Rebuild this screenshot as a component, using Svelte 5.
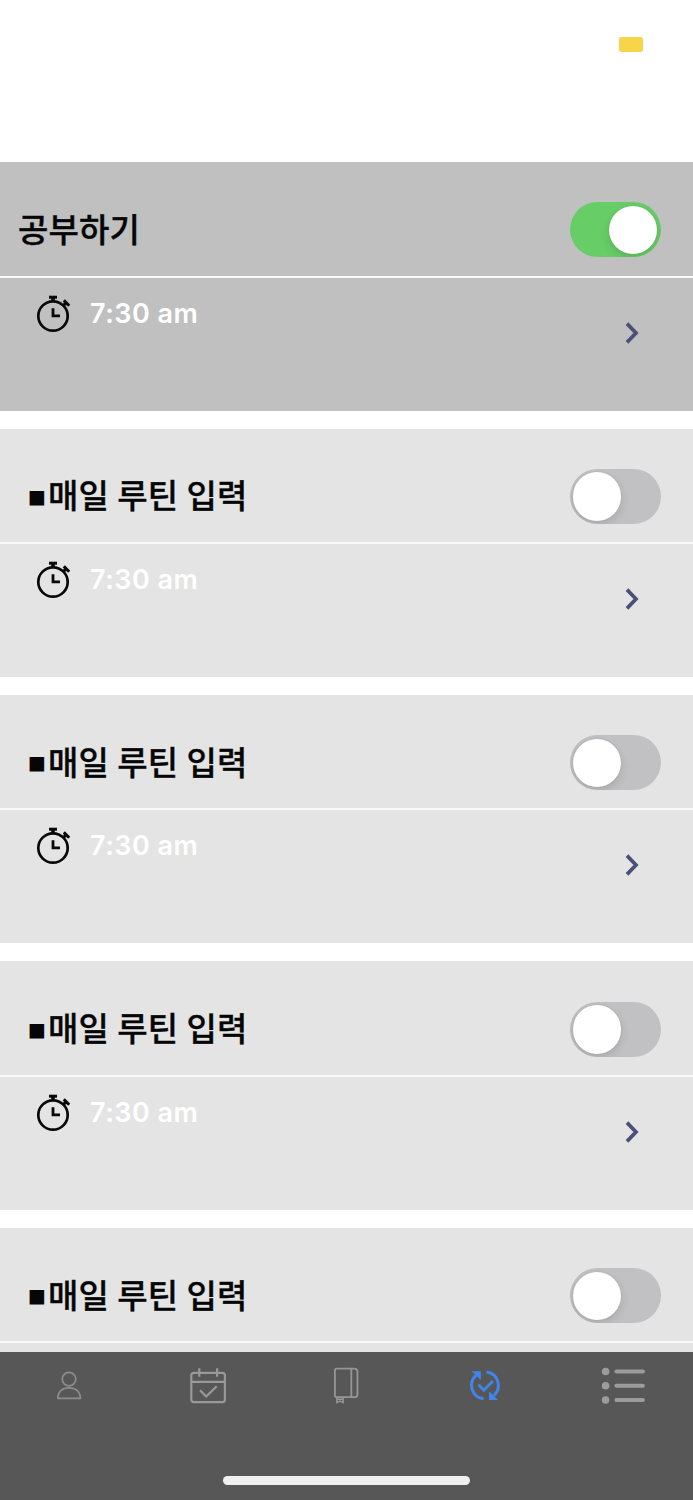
<script>
  const routines = [
    { title: '공부하기', time: '7:30 am', on: true },
    { title: '매일 루틴 입력', time: '7:30 am', on: false, marker: true },
    { title: '매일 루틴 입력', time: '7:30 am', on: false, marker: true },
    { title: '매일 루틴 입력', time: '7:30 am', on: false, marker: true },
    { title: '매일 루틴 입력', on: false, marker: true }
  ];
</script>

<div class="screen">
  <header class="status"><span class="battery"></span></header>

  <main class="list">
    {#each routines as routine}
      <section class="card" class:active={routine.on}>
        <div class="head">
          <h2 class:marked={routine.marker}>
            {#if routine.marker}<span class="marker">■</span>{/if}<span>{routine.title}</span>
          </h2>
          <div class="switch" class:on={routine.on} role="switch" aria-checked={routine.on} tabindex="0" aria-label={routine.title}>
            <span class="knob"></span>
          </div>
        </div>
        {#if routine.time}
          <div class="body">
            <svg class="timer" viewBox="0 0 36 40" width="36" height="40" fill="none" stroke="#080808">
              <circle cx="17" cy="23" r="14.7" stroke-width="2.7" />
              <path d="M13 4.2h8" stroke-width="3" />
              <path d="M17 5v4" stroke-width="3.6" />
              <path d="M17 15.2V22.9H24" stroke-width="2.8" />
              <path d="M27 13l3.2-3.3" stroke-width="3.2" />
              <path d="M27.8 7.4l5.4 5.4" stroke-width="3" />
            </svg>
            <span class="time">{routine.time}</span>
            <svg class="chevron" viewBox="0 0 16 24" width="16" height="24" fill="none" stroke="#4a5078" stroke-width="3.7">
              <path d="M3 2.6L12 12L3 21.4" />
            </svg>
          </div>
        {/if}
      </section>
    {/each}
  </main>

  <footer class="dock">
    <nav>
      <div class="tab">
        <svg viewBox="0 0 48 44" width="48" height="44" fill="none" stroke="#8c8c8c" stroke-width="1.7">
          <circle cx="24" cy="15.1" r="6.8" />
          <path d="M12.8 34.3C13 27.3 17.6 23.8 24 23.8S35.2 27.3 35.5 34.3Z" stroke-linejoin="round" />
        </svg>
      </div>
      <div class="tab">
        <svg viewBox="0 0 48 44" width="48" height="44" fill="none" stroke="#999" stroke-width="2.2">
          <rect x="7.3" y="8.8" width="33.6" height="29.3" rx="2.6" />
          <path d="M7.3 17.8h33.6M15.3 4.3v8.5M33.1 4.3v8.5" />
          <path d="M16 26.3l6.2 6.2L32.7 22.2" />
        </svg>
      </div>
      <div class="tab">
        <svg viewBox="0 0 48 44" width="48" height="44" fill="none" stroke="#969696" stroke-width="1.8">
          <path d="M12.9 31.6V6.5Q12.9 4.6 14.8 4.6H32.2Q35.4 4.6 35.4 7.8V30.4Q35.4 33.2 32.6 33.2H14.5Q12.9 33.2 12.9 31.6ZM29.3 4.6V33.2" />
          <path d="M14.9 33v5.6l3.1-1.5 3.1 1.5V33M15 35.2h6" stroke-width="1.5" />
        </svg>
      </div>
      <div class="tab">
        <svg viewBox="0 0 48 44" width="48" height="44" fill="none" stroke="#3f85ee" stroke-width="3">
          <path d="M22.6 34.8A13.5 13.5 0 0 1 15.2 11.2" />
          <path d="M25.6 8A13.5 13.5 0 0 1 32.8 31.5" />
          <path d="M10.8 7.3h9v8.6z" fill="#3f85ee" stroke="none" />
          <path d="M37 35.9h-9v-8.6z" fill="#3f85ee" stroke="none" />
          <path d="M17.4 20.6l5.4 5.7 9.2-9.4" stroke-width="2.8" />
        </svg>
      </div>
      <div class="tab">
        <svg viewBox="0 0 48 44" width="48" height="44" fill="#9c9c9c">
          <circle cx="5.6" cy="7.5" r="3.8" /><circle cx="5.6" cy="21.8" r="3.8" /><circle cx="5.6" cy="36" r="3.8" />
          <rect x="14.4" y="5.5" width="30.5" height="4" rx="2" />
          <rect x="14.4" y="19.8" width="30.5" height="4" rx="2" />
          <rect x="14.4" y="34" width="30.5" height="4" rx="2" />
        </svg>
      </div>
    </nav>
    <div class="home"></div>
  </footer>
</div>

<style>
  :global(body) { background: #fff; overflow: hidden; }
  .screen {
    width: 693px;
    height: 1500px;
    display: flex;
    flex-direction: column;
    overflow: hidden;
    background: #fff;
    font-family: Inter, "Noto Sans CJK KR", sans-serif;
  }
  .status {
    flex: none;
    box-sizing: border-box;
    height: 162.3px;
    padding: 37px 50px 0 0;
    display: flex;
    justify-content: flex-end;
  }
  .battery { width: 24px; height: 14.5px; border-radius: 2.5px; background: #f7d54b; }
  .list {
    flex: 1;
    min-height: 0;
    overflow: hidden;
    display: flex;
    flex-direction: column;
    gap: 18px;
  }
  .card { flex: none; height: 248.4px; background: #e4e4e4; }
  .card.active { background: #c0c0c0; }
  .head {
    box-sizing: border-box;
    height: 115.3px;
    padding: 22px 32.5px 0 18px;
    border-bottom: 2px solid #fafafa;
    display: flex;
    align-items: center;
    justify-content: space-between;
  }
  h2 {
    margin: 0;
    padding-bottom: 4px;
    display: flex;
    align-items: center;
    font: 500 33px/48px "Noto Sans CJK KR", sans-serif;
    letter-spacing: 0.1px;
    word-spacing: 0.8px;
    -webkit-text-stroke: 0.35px #060606;
    color: #060606;
    white-space: pre;
  }
  h2.marked { padding-left: 10px; }
  .marker { width: 20px; font: 19px/40px "DejaVu Sans", sans-serif; padding-top: 3px; -webkit-text-stroke: 0; }
  .switch {
    box-sizing: border-box;
    width: 90.5px;
    height: 55px;
    padding: 3.5px 3.5px 3.5px 3px;
    border-radius: 28px;
    display: flex;
    background: #c1c1c3;
    overflow: hidden;
  }
  .switch.on { background: #67cd67; justify-content: flex-end; }
  .knob {
    width: 48.4px;
    height: 48.4px;
    border-radius: 50%;
    background: #fff;
    box-shadow: 0 4px 10px rgba(0, 0, 0, 0.12), 0 0 2px rgba(0, 0, 0, 0.1);
  }
  .body { display: flex; align-items: flex-start; padding: 15px 53px 0 36px; }
  .time {
    margin: 3px 0 0 18px;
    font: 600 27px/36px Inter, sans-serif;
    letter-spacing: 0.5px;
    color: #fff;
  }
  .chevron { margin: 28px 0 0 auto; }
  .dock {
    flex: none;
    height: 147.7px;
    background: #575757;
    display: flex;
    flex-direction: column;
    align-items: center;
  }
  nav { width: 100%; display: grid; grid-template-columns: repeat(5, 1fr); padding-top: 12px; }
  .tab { display: flex; justify-content: center; height: 44px; }
  .home { width: 247px; height: 9px; margin-top: 68px; border-radius: 5px; background: #efefef; }
</style>
